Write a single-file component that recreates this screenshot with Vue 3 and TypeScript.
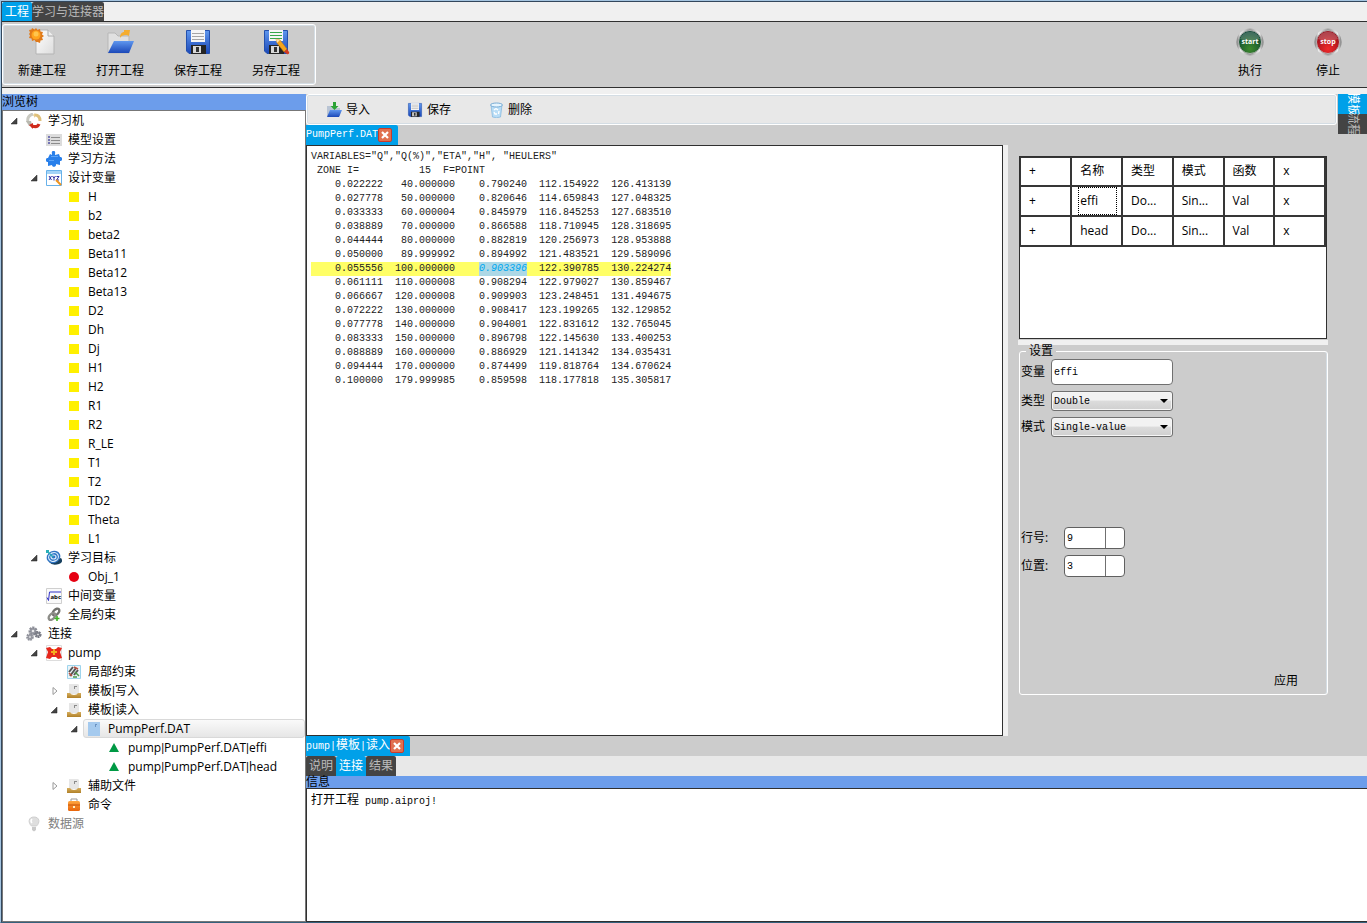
<script setup lang="ts">
import { ref } from 'vue'

interface TreeNode {
  label: string
  depth: number
  icon: string
  state?: 'open' | 'closed'
  selected?: boolean
  muted?: boolean
}

interface Action {
  label: string
  icon: string
  text?: string
}

const variables: string[] = [
  'H', 'b2', 'beta2', 'Beta11', 'Beta12', 'Beta13', 'D2', 'Dh', 'Dj', 'H1',
  'H2', 'R1', 'R2', 'R_LE', 'T1', 'T2', 'TD2', 'Theta', 'L1',
]

const nodes: TreeNode[] = [
  { label: '学习机', depth: 0, icon: 'cycle', state: 'open' },
  { label: '模型设置', depth: 1, icon: 'list' },
  { label: '学习方法', depth: 1, icon: 'puzzle' },
  { label: '设计变量', depth: 1, icon: 'xyz', state: 'open' },
  ...variables.map((label): TreeNode => ({ label, depth: 2, icon: 'square' })),
  { label: '学习目标', depth: 1, icon: 'target', state: 'open' },
  { label: 'Obj_1', depth: 2, icon: 'dot' },
  { label: '中间变量', depth: 1, icon: 'sqrt' },
  { label: '全局约束', depth: 1, icon: 'link' },
  { label: '连接', depth: 0, icon: 'gears', state: 'open' },
  { label: 'pump', depth: 1, icon: 'pump', state: 'open' },
  { label: '局部约束', depth: 2, icon: 'local' },
  { label: '模板|写入', depth: 2, icon: 'tray', state: 'closed' },
  { label: '模板|读入', depth: 2, icon: 'tray', state: 'open' },
  { label: 'PumpPerf.DAT', depth: 3, icon: 'file', state: 'open', selected: true },
  { label: 'pump|PumpPerf.DAT|effi', depth: 4, icon: 'triangle' },
  { label: 'pump|PumpPerf.DAT|head', depth: 4, icon: 'triangle' },
  { label: '辅助文件', depth: 2, icon: 'tray', state: 'closed' },
  { label: '命令', depth: 2, icon: 'case' },
  { label: '数据源', depth: 0, icon: 'bulb', muted: true },
]

const fileActions: Action[] = [
  { label: '新建工程', icon: 'new' },
  { label: '打开工程', icon: 'open' },
  { label: '保存工程', icon: 'save' },
  { label: '另存工程', icon: 'saveas' },
]
const runActions: Action[] = [
  { label: '执行', icon: 'start', text: 'start' },
  { label: '停止', icon: 'stop', text: 'stop' },
]
const templateActions: Action[] = [
  { label: '导入', icon: 'import' },
  { label: '保存', icon: 'save' },
  { label: '删除', icon: 'trash' },
]

const header = 'VARIABLES="Q","Q(%)","ETA","H", "HEULERS"\n ZONE I=          15  F=POINT'
const data: string[][] = [
  ['0.022222', '40.000000', '0.790240', '112.154922', '126.413139'],
  ['0.027778', '50.000000', '0.820646', '114.659843', '127.048325'],
  ['0.033333', '60.000004', '0.845979', '116.845253', '127.683510'],
  ['0.038889', '70.000000', '0.866588', '118.710945', '128.318695'],
  ['0.044444', '80.000000', '0.882819', '120.256973', '128.953888'],
  ['0.050000', '89.999992', '0.894992', '121.483521', '129.589096'],
  ['0.055556', '100.000000', '0.903396', '122.390785', '130.224274'],
  ['0.061111', '110.000008', '0.908294', '122.979027', '130.859467'],
  ['0.066667', '120.000008', '0.909903', '123.248451', '131.494675'],
  ['0.072222', '130.000000', '0.908417', '123.199265', '132.129852'],
  ['0.077778', '140.000000', '0.904001', '122.831612', '132.765045'],
  ['0.083333', '150.000000', '0.896798', '122.145630', '133.400253'],
  ['0.088889', '160.000000', '0.886929', '121.141342', '134.035431'],
  ['0.094444', '170.000000', '0.874499', '119.818764', '134.670624'],
  ['0.100000', '179.999985', '0.859598', '118.177818', '135.305817'],
]

const variable = ref('effi')
const dataType = ref('Double')
const mode = ref('Single-value')
const line = ref(9)
const position = ref(3)

const isActive = (index: number): boolean => index + 3 === line.value
const isPicked = (row: number, col: number): boolean => isActive(row) && col + 1 === position.value
const gap = (cell: string): string => ' '.repeat(12 - cell.length)

const columns = ['+', '名称', '类型', '模式', '函数', 'x']
const outputs = [
  ['+', 'effi', 'Do...', 'Sin...', 'Val', 'x'],
  ['+', 'head', 'Do...', 'Sin...', 'Val', 'x'],
]
</script>

<template>
  <svg class="defs" aria-hidden="true">
    <defs>
      <linearGradient id="g-blue" x1="0" y1="0" x2="0" y2="1">
        <stop offset="0" stop-color="#5f97ee" /><stop offset="1" stop-color="#1b48b8" />
      </linearGradient>
      <linearGradient id="g-paper" x1="0" y1="0" x2="1" y2="1">
        <stop offset="0" stop-color="#ffffff" /><stop offset="1" stop-color="#dcdcdc" />
      </linearGradient>
      <linearGradient id="g-rim" x1="0" y1="0" x2="1" y2="0">
        <stop offset="0" stop-color="#777" /><stop offset="0.15" stop-color="#eee" />
        <stop offset="0.5" stop-color="#999" /><stop offset="0.85" stop-color="#eee" /><stop offset="1" stop-color="#777" />
      </linearGradient>
      <radialGradient id="g-green" cx="0.5" cy="0.8" r="0.7">
        <stop offset="0" stop-color="#3e8a2b" /><stop offset="1" stop-color="#0b4532" />
      </radialGradient>
      <radialGradient id="g-red" cx="0.5" cy="0.8" r="0.7">
        <stop offset="0" stop-color="#f02a2a" /><stop offset="1" stop-color="#98101c" />
      </radialGradient>
      <linearGradient id="g-tray" x1="0" y1="0" x2="0" y2="1">
        <stop offset="0" stop-color="#d6ae5e" /><stop offset="1" stop-color="#b08028" />
      </linearGradient>
      <linearGradient id="g-case" x1="0" y1="0" x2="0" y2="1">
        <stop offset="0" stop-color="#ffa640" /><stop offset="1" stop-color="#e8640a" />
      </linearGradient>
    </defs>

    <symbol id="i-new" viewBox="0 0 28 28">
      <path d="M8 2h12l6 6v18H8z" fill="url(#g-paper)" stroke="#b4b4b4" />
      <path d="M20 2v6h6" fill="#eee" stroke="#aaa" />
      <path d="M7 0l1.500 2 2.500-1 .5 2.500 2.500.5-1 2.500 2 1.500-2 1.500 1 2.500-2.500.5-.5 2.500-2.500-1L7 14l-1.500-2L3 13l-.5-2.500L0 10l1-2.500L0 6l1-1.500L0 2l2.500-.5L3 0l2.500 1.500z" transform="translate(1 0)" fill="#e07a1a" />
      <circle cx="8" cy="7" r="4.500" fill="#ffa51e" /><circle cx="8" cy="6" r="2.500" fill="#ffc64e" />
    </symbol>
    <symbol id="i-open" viewBox="0 0 28 28">
      <path d="M2 25V5h7l3 3h11v17z" fill="#e0e0e0" stroke="#b7b7b7" />
      <path d="M14 10c0-4 2-6 4-6V2l6 0-1 6-2-1c-3 0-5 0-7 3z" fill="#f5ad2f" />
      <path d="M2 25l6-12h20l-5 12z" fill="url(#g-blue)" />
    </symbol>
    <symbol id="i-save" viewBox="0 0 28 28">
      <path d="M2.500 2.500h23v23H5l-2.500-2.500z" fill="url(#g-blue)" stroke="#2350ad" />
      <path d="M7 2h14v12H7z" fill="#f6f6f6" />
      <path d="M8 5.500h12M8 8.500h12M8 11.500h12" stroke="#a5a5a5" />
      <path d="M7 17h15v9H7z" fill="#252525" />
      <path d="M9 18h8v7H9z" fill="#d8d8d8" /><path d="M12 19h3v5h-3z" fill="#333" />
    </symbol>
    <symbol id="i-saveas" viewBox="0 0 28 28">
      <path d="M2.500 2.500h23v23H5l-2.500-2.500z" fill="url(#g-blue)" stroke="#2350ad" />
      <path d="M7 2h14v11H7z" fill="#f6f6f6" />
      <path d="M8 4.500h12M8 7.500h12M8 10.500h12" stroke="#36a84a" />
      <path d="M7 17h15v9H7z" fill="#252525" />
      <path d="M9 18h8v7H9z" fill="#d8d8d8" /><path d="M12 19h3v5h-3z" fill="#333" />
      <path d="M14 11l4 1 7 9-3 3-7-9z" fill="#f6a51c" stroke="#c87a10" stroke-width=".5" />
      <path d="M14 11l4 1-3 3z" fill="#f7dfb4" />
      <path d="M25 21l2 3c1 1-1 3-2 2l-3-2z" fill="#d33a20" />
    </symbol>
    <symbol id="i-start" viewBox="0 0 28 28">
      <circle cx="14" cy="14" r="13.500" fill="url(#g-rim)" />
      <circle cx="14" cy="14" r="11.500" fill="url(#g-green)" stroke="#b2b2b2" />
      <path d="M4 11a10.500 10.500 0 0 1 20 0q-10 4-20 0z" fill="#fff" opacity=".22" />
    </symbol>
    <symbol id="i-stop" viewBox="0 0 28 28">
      <circle cx="14" cy="14" r="13.500" fill="url(#g-rim)" />
      <circle cx="14" cy="14" r="11.500" fill="url(#g-red)" stroke="#b2b2b2" />
      <path d="M4 11a10.500 10.500 0 0 1 20 0q-10 4-20 0z" fill="#fff" opacity=".22" />
    </symbol>
    <symbol id="i-import" viewBox="0 0 16 16">
      <path d="M1 14V4h4l1 2h8v8z" fill="#b9c4d4" />
      <path d="M1 15l3-7h12l-3 7z" fill="url(#g-blue)" />
      <path d="M7 0h3v4h2.500l-4 4-4-4H7z" fill="#2ba335" />
    </symbol>
    <symbol id="i-trash" viewBox="0 0 16 16">
      <path d="M3 3h11l-1.500 12q-4 1.500-8 0z" fill="#b9ddf6" stroke="#7fb4dc" stroke-width=".7" />
      <ellipse cx="8.500" cy="3" rx="6" ry="2" fill="#e6f4fd" stroke="#78acd5" />
      <path d="M6 8l2-1.500L10 8M11 9l-.5 3M6 10l1 2h2" fill="none" stroke="#fff" stroke-width="1.300" />
    </symbol>

    <symbol id="i-cycle" viewBox="0 0 16 16">
      <path d="M7 1C3 2 1 5 2 9" fill="none" stroke="#c9c9c1" stroke-width="3" />
      <path d="M0 8l5 0 1 4-3 1z" fill="#b9b9b0" />
      <path d="M9 2c3 0 5 2 5 6" fill="none" stroke="#dfc07b" stroke-width="3" />
      <path d="M9 0v5L7 2z" fill="#e8cc8c" />
      <path d="M13 11c-1 3-4 3-7 2" fill="none" stroke="#cf2b1c" stroke-width="3" />
      <path d="M7 10v6l-4-4z" fill="#cf2b1c" />
    </symbol>
    <symbol id="i-list" viewBox="0 0 16 16">
      <path d="M0 2h16v12H0z" fill="#dcdcdc" />
      <path d="M2 4h2v2H2zM2 7h2v2H2zM2 10h2v2H2z" fill="#7676b4" />
      <path d="M5 5.500h9M5 8.500h9M5 11.500h9" stroke="#8c8c8c" />
    </symbol>
    <symbol id="i-puzzle" viewBox="0 0 16 16">
      <path d="M4 3l2 1c0-2-1-4 1.500-4S9 2 9 4l4-1 1 3c3 0 3 4 0 4l0 4-4-1c1 3-4 4-4 1l-4 1V11c-3 0-3-4 0-4z" fill="#287fea" />
      <path d="M5 5.500h7M3 9.500h5" stroke="#5ba4f7" />
    </symbol>
    <symbol id="i-xyz" viewBox="0 0 16 16">
      <path d="M.5.5h15v15H.5z" fill="#fff" stroke="#68b2ea" />
      <path d="M1 1h14v3H1z" fill="#a4d4f7" />
      <path d="M3 6l2.500 4M5.500 6L3 10M6.500 6L8 8l1.500-2M8 8v2.500M10.500 6.500h2.500l-2.500 3.500H13" fill="none" stroke="#2b2ba0" />
      <path d="M10 10l5 5" stroke="#ef941e" stroke-width="2" />
    </symbol>
    <symbol id="i-square" viewBox="0 0 16 16"><path d="M3 3h10v10H3z" fill="#fff000" /></symbol>
    <symbol id="i-dot" viewBox="0 0 16 16"><circle cx="8" cy="8" r="5" fill="#e60012" /></symbol>
    <symbol id="i-triangle" viewBox="0 0 16 16"><path d="M8 3l5 9H3z" fill="#009944" /></symbol>
    <symbol id="i-target" viewBox="0 0 16 16">
      <path d="M3 12l12-4q3 4-2 6-7 2-10-2z" fill="#17405e" />
      <ellipse cx="7.500" cy="7" rx="7" ry="6" transform="rotate(-25 7.500 7)" fill="#2f74c4" />
      <ellipse cx="7.500" cy="7" rx="5" ry="4.300" transform="rotate(-25 7.500 7)" fill="none" stroke="#dcecfb" stroke-width="1.200" />
      <ellipse cx="7.500" cy="7" rx="2.500" ry="2" fill="none" stroke="#dcecfb" stroke-width="1.200" />
      <path d="M1 1l6 6" stroke="#29a7b8" stroke-width="1.500" /><path d="M0 0h3v3H0z" fill="#29b0b8" />
    </symbol>
    <symbol id="i-sqrt" viewBox="0 0 16 16">
      <path d="M.5.5h15v15H.5z" fill="#fafafa" stroke="#cfcfcf" />
      <path d="M1 9.500l1.500 3 1-8.500H15" fill="none" stroke="#3030c8" />
    </symbol>
    <symbol id="i-link" viewBox="0 0 16 16">
      <ellipse cx="10" cy="5" rx="2.500" ry="4" transform="rotate(45 10 5)" fill="none" stroke="#70706c" stroke-width="2.400" />
      <ellipse cx="6" cy="9.500" rx="2.500" ry="4" transform="rotate(45 6 9.500)" fill="none" stroke="#8d8d88" stroke-width="2.400" />
      <path d="M11 9v5M8.500 11.500h5" stroke="#3fb525" stroke-width="1.600" />
    </symbol>
    <symbol id="i-gears" viewBox="0 0 16 16">
      <circle cx="7" cy="5" r="3.200" fill="#a2a4ac" stroke="#8b8d96" stroke-width="2.600" stroke-dasharray="2 .8" />
      <circle cx="12" cy="8.500" r="2.400" fill="#8d8f98" stroke="#777983" stroke-width="2.400" stroke-dasharray="1.600 .6" />
      <circle cx="4" cy="11" r="2.600" fill="#a2a4ac" stroke="#8f919a" stroke-width="2.400" stroke-dasharray="1.600 .6" />
      <circle cx="7" cy="5" r="1" fill="#fff" /><circle cx="12" cy="8.500" r=".8" fill="#eee" /><circle cx="4" cy="11" r=".8" fill="#fff" />
    </symbol>
    <symbol id="i-pump" viewBox="0 0 16 16">
      <path d="M.5.5h15v15H.5z" fill="#fff" stroke="#ddd" />
      <path d="M0 3l4-1 2 2h4l2-2 4 1-2 4 2 6-4 1-2-2H6l-2 2-4-1 2-6z" fill="#e6261c" />
      <path d="M5 6h6v2H5zM7 4h2v6H7z" fill="#f4ab1e" />
    </symbol>
    <symbol id="i-local" viewBox="0 0 16 16">
      <path d="M1.500 1.500h13v13h-13z" fill="#e9f3f8" stroke="#9ed4ec" />
      <path d="M3 8l4-5M4 12l6-8M8 11l4-5" stroke="#555" stroke-width="2" />
      <path d="M8 3l4 2M3 9l3 3" stroke="#b8503f" stroke-width="1.500" />
      <path d="M9 8l4 4M7 13h4" stroke="#4b9a48" stroke-width="1.500" />
    </symbol>
    <symbol id="i-tray" viewBox="0 0 16 16">
      <path d="M3 1h9l1 1v9H3z" fill="#e6e6e6" /><path d="M8 3h3v1H9v2H8z" fill="#8b8b8b" />
      <path d="M1 10h3q1 2 4 2t4-2h3v5H1z" fill="url(#g-tray)" />
    </symbol>
    <symbol id="i-file" viewBox="0 0 16 16">
      <path d="M2 1h12v14H2z" fill="#a5caee" /><path d="M9 3.500h2M9.500 3v3" stroke="#6b93c2" />
    </symbol>
    <symbol id="i-case" viewBox="0 0 16 16">
      <path d="M5 4V2h6v2" fill="none" stroke="#999" />
      <rect x="2" y="4" width="12" height="10" rx="1.500" fill="url(#g-case)" />
      <path d="M2 8h12" stroke="#c65308" /><path d="M7 9h2v2H7z" fill="#fff2c8" />
    </symbol>
    <symbol id="i-bulb" viewBox="0 0 16 16">
      <path d="M8 1c6 0 6 6 2.500 9h-5C2 7 2 1 8 1z" fill="#dedede" stroke="#cfcfcf" />
      <path d="M6 11h4v3l-2 1.500L6 14z" fill="#c9c9c9" /><path d="M6 3q-2 2 0 4" fill="none" stroke="#fff" stroke-width="1.500" />
    </symbol>
    <symbol id="i-expanded" viewBox="0 0 8 8"><path d="M6 1v6H0z" fill="#444" stroke="#222" stroke-width=".5" /></symbol>
    <symbol id="i-collapsed" viewBox="0 0 8 8"><path d="M2 .5v7L6 4z" fill="#fff" stroke="#999" /></symbol>
    <symbol id="i-close" viewBox="0 0 14 14">
      <rect x=".5" y=".5" width="13" height="13" rx="1.500" fill="#e0704f" stroke="#c93b2c" />
      <path d="M4 4l6 6M10 4l-6 6" stroke="#fff" stroke-width="2.200" />
    </symbol>
  </svg>

  <div class="window">
    <nav class="ribbon-tabs">
      <button type="button" class="tab padded active">工程</button>
      <button type="button" class="tab">学习与连接器</button>
    </nav>

    <header class="ribbon">
      <div class="group framed">
        <button v-for="a in fileActions" :key="a.label" type="button" class="big">
          <svg class="icon-28"><use :href="'#i-' + a.icon" /></svg>
          <span>{{ a.label }}</span>
        </button>
      </div>
      <div class="group">
        <button v-for="a in runActions" :key="a.label" type="button" class="big">
          <span class="disc">
            <svg class="icon-28"><use :href="'#i-' + a.icon" /></svg>
            <span class="disc-text">{{ a.text }}</span>
          </span>
          <span>{{ a.label }}</span>
        </button>
      </div>
    </header>

    <div class="body">
      <aside class="browser">
        <h2 class="caption">浏览树</h2>
        <ul class="tree">
          <li v-for="n in nodes" :key="n.label" class="node" :class="'depth-' + n.depth">
            <span class="twist">
              <svg v-if="n.state" class="icon-8"><use :href="n.state === 'open' ? '#i-expanded' : '#i-collapsed'" /></svg>
            </span>
            <span class="item" :class="{ selected: n.selected, muted: n.muted }">
              <span class="disc">
                <svg class="icon-16"><use :href="'#i-' + n.icon" /></svg>
                <span v-if="n.icon === 'sqrt'" class="abc-text">abc</span>
              </span>
              <span><template v-for="(part, p) in n.label.split('|')" :key="p"><span v-if="p" class="pipe">|</span>{{ part }}</template></span>
            </span>
          </li>
        </ul>
      </aside>

      <div class="content">
        <div class="upper">
          <main class="work">
            <div class="actions">
              <button v-for="a in templateActions" :key="a.label" type="button" class="small">
                <svg class="icon-16"><use :href="'#i-' + a.icon" /></svg>
                <span>{{ a.label }}</span>
              </button>
            </div>

            <div class="panes">
              <section class="document">
                <div class="strip">
                  <div class="doc-tab">
                    <span class="mono">PumpPerf.DAT</span>
                    <button type="button" class="close" aria-label="关闭"><svg class="icon-14"><use href="#i-close" /></svg></button>
                  </div>
                </div>
                <pre class="editor">{{ header }}
<span v-for="(row, r) in data" :key="r" class="line" :class="{ current: isActive(r) }"><template v-for="(cell, c) in row" :key="c">{{ gap(cell) }}<span :class="{ picked: isPicked(r, c) }">{{ cell }}</span></template></span></pre>
              </section>

              <section class="properties">
                <div class="grid-box">
                  <table>
                    <thead>
                      <tr><th v-for="c in columns" :key="c" scope="col">{{ c }}</th></tr>
                    </thead>
                    <tbody>
                      <tr v-for="(row, r) in outputs" :key="r">
                        <td v-for="(cell, c) in row" :key="c"><span :class="{ focus: r === 0 && c === 1 }">{{ cell }}</span></td>
                      </tr>
                    </tbody>
                  </table>
                </div>
                <div class="splitter"></div>
                <fieldset class="settings">
                  <legend>设置</legend>
                  <div class="field tall">
                    <label for="variable">变量</label>
                    <input id="variable" v-model="variable" class="text" type="text" />
                  </div>
                  <div class="field">
                    <label for="type">类型</label>
                    <span class="combo">
                      <select id="type" v-model="dataType"><option>Double</option></select>
                    </span>
                  </div>
                  <div class="field">
                    <label for="mode">模式</label>
                    <span class="combo">
                      <select id="mode" v-model="mode"><option>Single-value</option></select>
                    </span>
                  </div>
                  <div class="spins">
                    <div class="spin-row">
                      <label for="line">行号:</label>
                      <span class="spin"><input id="line" v-model="line" type="number" /></span>
                    </div>
                    <div class="spin-row">
                      <label for="position">位置:</label>
                      <span class="spin"><input id="position" v-model="position" type="number" /></span>
                    </div>
                  </div>
                  <button type="button" class="apply">应用</button>
                </fieldset>
              </section>
            </div>
          </main>

          <nav class="side-tabs">
            <button type="button" class="side active">模板</button>
            <button type="button" class="side">流程</button>
          </nav>
        </div>

        <div class="strip">
          <div class="doc-tab">
            <span><span class="mono">pump|</span>模板<span class="mono">|</span>读入</span>
            <button type="button" class="close" aria-label="关闭"><svg class="icon-14"><use href="#i-close" /></svg></button>
          </div>
        </div>
        <nav class="view-tabs">
          <button type="button" class="tab padded">说明</button>
          <button type="button" class="tab padded active">连接</button>
          <button type="button" class="tab padded">结果</button>
        </nav>
        <h2 class="caption short">信息</h2>
        <div class="log">打开工程<span class="mono"> pump.aiproj!</span></div>
      </div>
    </div>
  </div>
</template>

<style>
html,
body {
  margin: 0;
  background: #f0f0f0;
}
</style>

<style scoped>
* {
  box-sizing: border-box;
}

.defs {
  position: absolute;
  width: 0;
  height: 0;
}

.window {
  display: flex;
  flex-direction: column;
  min-height: 100vh;
  padding-left: 1px;
  border: 0 solid #a4c4e0;
  border-width: 1px 0 1px 1px;
  border-bottom-color: #35607c;
  background: #f0f0f0;
  box-shadow: inset 1px 1px 0 #33475c;
  font: 12px/18px "Open Sans", "Noto Sans CJK SC", sans-serif;
  color: #000;
}

button {
  margin: 0;
  padding: 0;
  border: 0;
  background: none;
  font: inherit;
  color: inherit;
  white-space: nowrap;
}

svg {
  flex: none;
  display: block;
}

.icon-28 {
  width: 28px;
  height: 28px;
}

.icon-16 {
  width: 16px;
  height: 16px;
}

.icon-14 {
  width: 14px;
  height: 14px;
}

.icon-8 {
  width: 8px;
  height: 8px;
}

.mono {
  font-family: "Liberation Mono", monospace;
  font-size: 10px;
  white-space: pre;
}

.pipe {
  font-family: Roboto, sans-serif;
}

.disc {
  position: relative;
  flex: none;
}

.disc-text {
  position: absolute;
  inset: 9px 0 auto;
  color: #fff;
  font-size: 7px;
  font-weight: bold;
  line-height: 9px;
  text-align: center;
}

.abc-text {
  position: absolute;
  top: 5px;
  right: 1px;
  font-size: 6px;
  font-weight: bold;
  line-height: 8px;
}

.ribbon-tabs {
  display: flex;
  height: 20px;
  padding-top: 1px;
}

.tab {
  height: 20px;
  background: #444;
  color: #bbb;
  border-radius: 2px 2px 0 0;
}

.padded {
  padding: 0 3px;
}

.tab.active {
  background: #00a0e9;
  color: #fff;
}

.ribbon {
  display: flex;
  justify-content: space-between;
  height: 67px;
  padding: 2px 0;
  border: solid #303030;
  border-width: 1px 0;
  background: #ccc;
}

.group {
  display: flex;
  padding: 1px 0;
}

.group.framed {
  padding: 0;
  border: 1px solid #fff;
  border-radius: 3px;
  box-shadow: inset 0 0 0 1px #d4dde4;
}

.big {
  display: flex;
  flex-direction: column;
  align-items: center;
  gap: 6px;
  width: 78px;
  padding-top: 3px;
}

.body {
  display: flex;
  flex: 1;
  padding-top: 6px;
}

.caption {
  height: 16px;
  margin: 0;
  background: #6c9deb;
  font-size: 12px;
  line-height: 16px;
  font-weight: normal;
}

.caption.short {
  height: 12px;
  line-height: 12px;
}

.browser {
  display: flex;
  flex: none;
  flex-direction: column;
  width: 304px;
}

.tree {
  flex: 1;
  margin: 0;
  padding: 0;
  border: 1px solid #777;
  background: #fff;
  list-style: none;
}

.node {
  display: flex;
  align-items: center;
  height: 19px;
}

.depth-0 { padding-left: 4px; }
.depth-1 { padding-left: 24px; }
.depth-2 { padding-left: 44px; }
.depth-3 { padding-left: 64px; }
.depth-4 { padding-left: 84px; }

.twist {
  display: flex;
  justify-content: center;
  width: 16px;
}

.item {
  display: flex;
  flex: 1;
  align-items: center;
  gap: 6px;
  height: 19px;
  padding-left: 2px;
  border: 1px solid transparent;
  border-radius: 3px;
  white-space: nowrap;
}

.item.selected {
  border-color: #d9d9d9;
  background: linear-gradient(#fafafa, #e6e6e6);
}

.item.muted {
  color: #808080;
}

.content {
  display: flex;
  flex: 1;
  flex-direction: column;
  min-width: 0;
}

.upper {
  display: flex;
  flex: 1;
  min-height: 642px;
  background: #ccc;
}

.work {
  display: flex;
  flex: 1;
  flex-direction: column;
  min-width: 0;
}

.actions {
  display: flex;
  height: 31px;
  padding-left: 19px;
  gap: 37px;
  border: 1px solid #fff;
  border-radius: 3px;
  background: #e8e8e8;
  box-shadow: inset 0 0 0 1px #d4dde4;
}

.small {
  display: flex;
  align-items: center;
  gap: 4px;
}

.panes {
  display: flex;
  flex: 1;
}

.document {
  display: flex;
  flex: 1;
  flex-direction: column;
  min-width: 0;
}

.strip {
  display: flex;
  height: 20px;
  background: #ccc;
}

.doc-tab {
  display: flex;
  align-items: center;
  padding-right: 6px;
  border-radius: 0 2px 0 0;
  background: #00a0e9;
  color: #fff;
}

.editor {
  flex: 1;
  margin: 0 5px 0 0;
  padding: 4px 4px;
  border: 1px solid #303030;
  background: #fff;
  box-shadow: 5px 0 0 #f0f0f0;
  font: 10px/14px "Liberation Mono", monospace;
  color: #222;
}

.line {
  display: block;
  width: max-content;
}

.current {
  background: #ffff66;
}

.picked {
  display: inline-block;
  background: #add8e6;
  color: #00a8f0;
  font-style: italic;
}

.properties {
  display: flex;
  flex: none;
  flex-direction: column;
  width: 329px;
  padding: 31px 9px 41px 10px;
}

.grid-box {
  height: 183px;
  margin: 0 1px;
  border: 1px solid #303030;
  background: #fff;
}

table {
  width: 100%;
  border-collapse: collapse;
  table-layout: fixed;
}

th,
td {
  height: 30px;
  padding: 0 0 0 6px;
  border: 2px solid #363636;
  font-weight: normal;
  text-align: left;
}

th {
  height: 28px;
}

tr > :first-child,
tr > :last-child {
  padding-left: 8px;
}

tr:first-child > th {
  border-top-width: 1px;
}

tr > :first-child {
  border-left-width: 1px;
}

td span {
  display: block;
  padding-left: 2px;
  line-height: 26px;
}

th:not(:first-child):not(:last-child) {
  padding-left: 8px;
}

td:first-child span,
td:last-child span {
  padding-left: 0;
}

td .focus {
  width: 39px;
  padding-left: 1px;
  border: 1px dotted #000;
}

.splitter {
  height: 5px;
  margin-top: 1px;
  background: #f0f0f0;
}

.settings {
  display: flex;
  flex: 1;
  flex-direction: column;
  min-width: 0;
  margin: 0 0 0 1px;
  padding: 0 1px 4px;
  border: 1px solid #fff;
  border-radius: 3px;
  box-shadow: inset -1px 0 0 #d4dde4;
}

legend {
  margin-left: 5px;
  padding: 0 3px;
  line-height: 12px;
}

.field {
  display: flex;
  align-items: center;
  gap: 6px;
  height: 20px;
  margin-bottom: 6px;
}

.field.tall {
  height: 26px;
  margin-top: 2px;
}

.text,
.combo,
select {
  width: 122px;
}

input,
select {
  padding: 0 2px;
  border: 1px solid #707070;
  font: 10px "Liberation Mono", monospace;
  color: #000;
}

.text {
  height: 26px;
  border-radius: 4px;
  background: #fff;
}

.combo {
  position: relative;
}

.combo::after {
  content: "";
  position: absolute;
  top: 8px;
  right: 5px;
  border: 4px solid transparent;
  border-top-color: #000;
  border-bottom: 0;
  pointer-events: none;
}

select {
  display: block;
  height: 20px;
  appearance: none;
  border-radius: 3px;
  background: linear-gradient(#f2f2f2 0 45%, #dcdcdc 50%, #cfcfcf);
  box-shadow: inset 0 0 0 1px #f6f6f6;
}

.spins {
  display: flex;
  flex-direction: column;
  gap: 6px;
  margin-top: 84px;
}

.spin-row {
  display: flex;
  align-items: center;
  height: 22px;
}

.spin-row label {
  width: 43px;
}

.spin {
  display: flex;
  width: 61px;
  height: 22px;
  border: 1px solid #606060;
  border-radius: 4px;
  background: #fff;
}

.spin input {
  width: 41px;
  border-width: 0 1px 0 0;
  background: none;
  appearance: textfield;
}

.apply {
  align-self: flex-end;
  margin-top: auto;
  margin-right: 28px;
}

.side-tabs {
  display: flex;
  flex: none;
  flex-direction: column;
  width: 29px;
  margin-left: 1px;
}

.side {
  display: flex;
  align-items: center;
  justify-content: center;
  height: 20px;
  overflow: hidden;
  background: #444;
  color: #bbb;
  writing-mode: vertical-rl;
  text-orientation: sideways;
}

.side.active {
  background: #00a0e9;
  color: #fff;
}

.view-tabs {
  display: flex;
  height: 20px;
  background: #e8e8e8;
}

.log {
  height: 134px;
  padding: 2px 4px;
  border: 1px solid #303030;
  border-right: 0;
  background: #fff;
}
</style>
